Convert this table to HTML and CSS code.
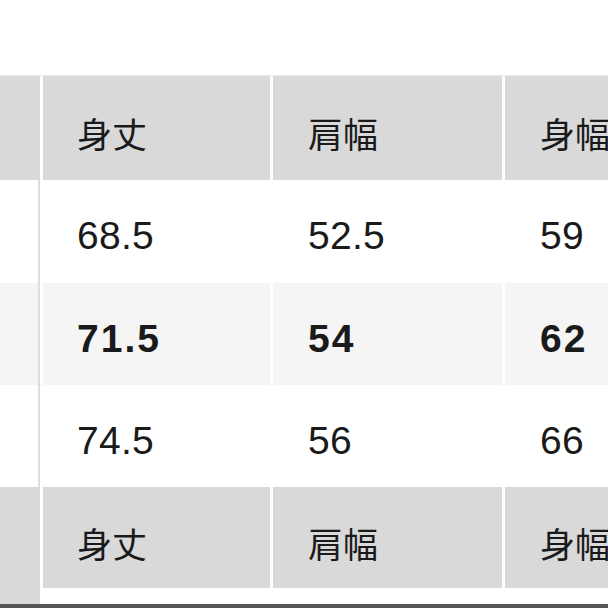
FILE: index.html
```html
<!DOCTYPE html>
<html lang="ja">
<head>
<meta charset="utf-8">
<link rel="stylesheet" href="styles.css">
</head>
<body>
<div class="table">
  <div class="row head">
    <div class="c0"></div>
    <div class="cell c1">身丈</div>
    <div class="cell c2">肩幅</div>
    <div class="cell c3">身幅</div>
  </div>
  <div class="row data">
    <div class="c0"></div>
    <div class="cell c1">68.5</div>
    <div class="cell c2">52.5</div>
    <div class="cell c3">59</div>
  </div>
  <div class="row data alt bold">
    <div class="c0"></div>
    <div class="cell c1">71.5</div>
    <div class="cell c2">54</div>
    <div class="cell c3">62</div>
  </div>
  <div class="row data">
    <div class="c0"></div>
    <div class="cell c1">74.5</div>
    <div class="cell c2">56</div>
    <div class="cell c3">66</div>
  </div>
  <div class="row head head2">
    <div class="c0"></div>
    <div class="cell c1">身丈</div>
    <div class="cell c2">肩幅</div>
    <div class="cell c3">身幅</div>
  </div>
  <div class="row tail">
    <div class="c0"></div>
    <div class="rest"></div>
  </div>
  <div class="rule"></div>
</div>
</body>
</html>
```

FILE: styles.css
```css
html, body {
  margin: 0;
  padding: 0;
  background: #ffffff;
}
body {
  width: 608px;
  height: 608px;
  overflow: hidden;
  font-family: "Liberation Sans", "Noto Sans CJK JP", sans-serif;
  color: #1a1a1a;
}
.table {
  padding-top: 75px;
}
.table::before {
  content: "";
  display: block;
  height: 1px;
  background: #e9e9e9;
}
.row {
  display: flex;
  column-gap: 3px;
  height: 102px;
}
.c0 {
  width: 40px;
  flex: none;
  box-sizing: border-box;
}
.cell {
  display: flex;
  align-items: center;
  box-sizing: border-box;
  padding-left: 35px;
  padding-top: 9px;
  white-space: nowrap;
  overflow: hidden;
}
.c1 { width: 227px; flex: none; padding-left: 34px; }
.c2 { width: 229px; flex: none; }
.c3 { flex: 1; }

.head { height: 104px; }
.head .c0,
.head .cell { background: #d9d9d9; }
.head .cell {
  font-family: "Noto Sans CJK JP", sans-serif;
  font-size: 35px;
  font-weight: 400;
  letter-spacing: 0;
}
.head2 { height: 101px; }

.data .c0 {
  background: #ffffff;
  border-right: 2px solid #dedede;
}
.data .cell {
  font-size: 39px;
  background: #ffffff;
  letter-spacing: 0.3px;
}
.data.alt .c0,
.data.alt .cell { background: #f5f5f5; }
.data.bold .cell {
  font-weight: 700;
  letter-spacing: 2px;
}

.row.data:nth-child(2) { height: 103px; }

.tail { height: 16px; }
.tail .c0 { background: #d9d9d9; }
.tail .rest { flex: 1; background: #ffffff; }

.rule {
  height: 4px;
  background: #555555;
}
```
